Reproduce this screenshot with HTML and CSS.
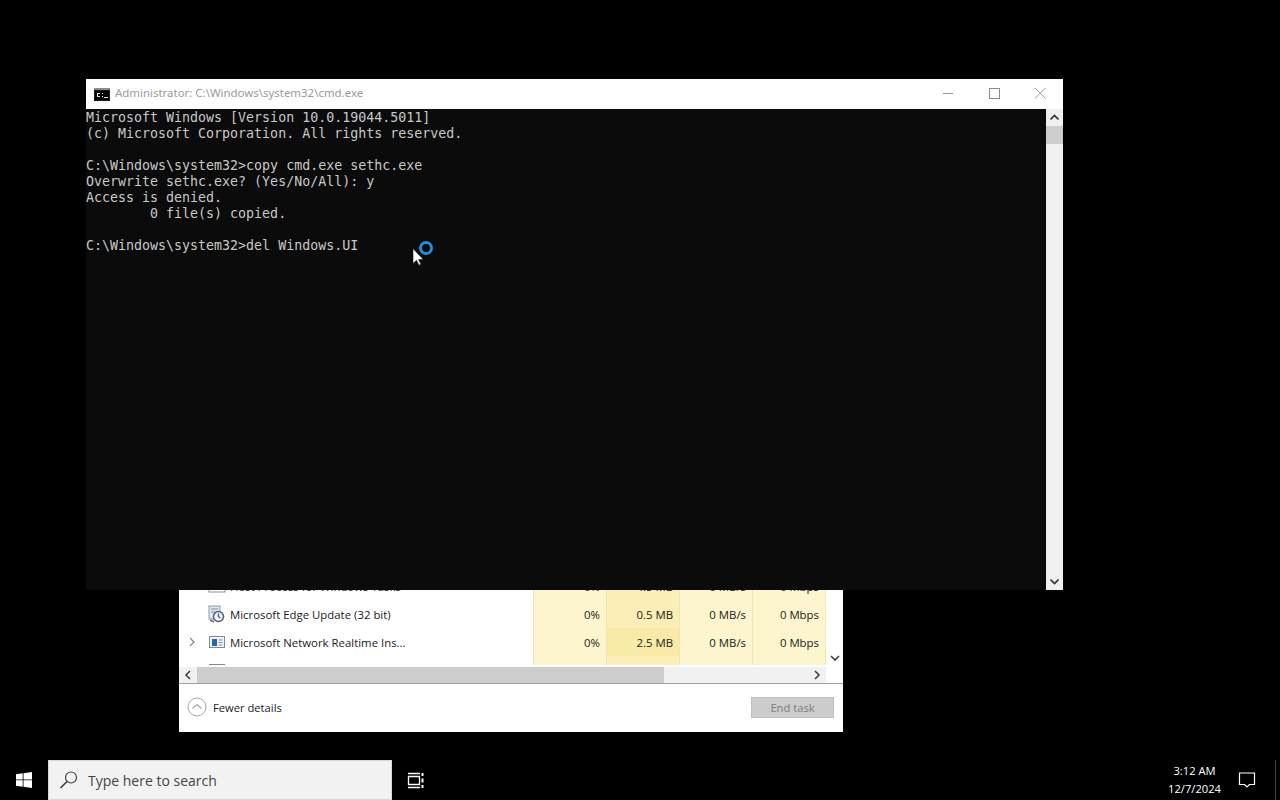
FILE: index.html
```html
<!DOCTYPE html>
<html lang="en">
<head>
<meta charset="utf-8">
<title>Administrator: C:\Windows\system32\cmd.exe</title>
<link rel="stylesheet" href="styles.css">
</head>
<body>
<div class="screen">
  <main class="desktop">
    <section class="taskmgr">
      <div class="tm-body">
        <div class="tm-table">
          <div class="tm-rows">
            <div class="row row-cut-top">
              <span class="chev"></span>
              <svg class="app-ico" width="18" height="18" viewBox="0 0 18 18"><rect x="1" y="3" width="16" height="12" fill="#fff" stroke="#8a8f98"/><rect x="3" y="6" width="6" height="7" fill="#2f6fb0"/></svg>
              <span class="name">Host Process for Windows Tasks</span>
              <span class="cell">0%</span><span class="cell mem">4.5 MB</span><span class="cell">0 MB/s</span><span class="cell">0 Mbps</span>
            </div>
            <div class="row">
              <span class="chev"></span>
              <svg class="app-ico" width="18" height="18" viewBox="0 0 18 18"><rect x="1" y="1" width="11" height="13" fill="#dfe8f0" stroke="#8d9aa8"/><path d="M3 4h7M3 7h4" stroke="#7b8a9a"/><circle cx="10.500" cy="11.500" r="5" fill="#f2f5f8" stroke="#55606c" stroke-width="1.500"/><path d="M10.500 8.500v3l2 1.500" stroke="#3c78b4" stroke-width="1.500" fill="none"/><path d="M2 15l4 2" stroke="#5d6a76" stroke-width="1.500"/></svg>
              <span class="name">Microsoft Edge Update (32 bit)</span>
              <span class="cell">0%</span><span class="cell mem">0.5 MB</span><span class="cell">0 MB/s</span><span class="cell">0 Mbps</span>
            </div>
            <div class="row">
              <span class="chev"><svg width="8" height="10" viewBox="0 0 8 10"><path d="M2 1l4 4-4 4" fill="none" stroke="#8a8a8a" stroke-width="1.300"/></svg></span>
              <svg class="app-ico" width="18" height="18" viewBox="0 0 18 18"><rect x="1.500" y="3.500" width="15" height="11" fill="#f4f7fa" stroke="#7f8994"/><rect x="4" y="6" width="5" height="7" fill="#2369ac"/><path d="M10.500 7h4M10.500 9.500h4M10.500 12h4" stroke="#7f8994"/></svg>
              <span class="name">Microsoft Network Realtime Ins...</span>
              <span class="cell">0%</span><span class="cell mem mem-strong">2.5 MB</span><span class="cell">0 MB/s</span><span class="cell">0 Mbps</span>
            </div>
            <div class="row">
              <span class="chev"></span>
              <svg class="app-ico" width="18" height="18" viewBox="0 0 18 18"><rect x="1.500" y="3.500" width="15" height="11" fill="#f4f7fa" stroke="#7f8994"/></svg>
              <span class="name"></span>
              <span class="cell"></span><span class="cell mem"></span><span class="cell"></span><span class="cell"></span>
            </div>
          </div>
          <div class="tm-vscroll">
            <svg class="vs-down" width="10" height="7" viewBox="0 0 10 7"><path d="M1 1l4 4 4-4" fill="none" stroke="#404040" stroke-width="1.600"/></svg>
          </div>
        </div>
        <div class="tm-hscroll">
          <svg class="hs-btn" width="18" height="16" viewBox="0 0 17 16"><path d="M10.500 4l-4 4 4 4" fill="none" stroke="#404040" stroke-width="1.600"/></svg>
          <div class="hs-track"><div class="hs-thumb"></div></div>
          <svg class="hs-btn" width="18" height="16" viewBox="0 0 17 16"><path d="M6.500 4l4 4-4 4" fill="none" stroke="#404040" stroke-width="1.600"/></svg>
          <span class="hs-corner"></span>
        </div>
      </div>
      <footer class="tm-footer">
        <div class="fewer">
          <svg width="20" height="20" viewBox="0 0 20 20"><circle cx="10" cy="10" r="9" fill="#fff" stroke="#a6a6a6"/><path d="M5.500 11.500l4.500-4 4.500 4" fill="none" stroke="#a6a6a6" stroke-width="1.200"/></svg>
          <span>Fewer details</span>
        </div>
        <div class="end-task">End task</div>
      </footer>
    </section>

    <section class="cmd">
      <header class="cmd-title">
        <svg class="cmd-ico" width="16" height="13" viewBox="0 0 16 13"><rect width="16" height="13" fill="#1a1a1a"/><rect y="0" width="16" height="2" fill="#8c8c8c"/><rect x="1" y="3" width="14" height="9" fill="#000"/><path d="M3 5h3v1H4v2h2v1H3zM8 8h1v1H8zM8 5h1v1H8zM10 9h4v1h-4z" fill="#e6e6e6"/></svg>
        <span class="cmd-name">Administrator: C:\Windows\system32\cmd.exe</span>
        <div class="win-btns">
          <svg class="win-btn" width="46" height="30" viewBox="0 0 46 30"><path d="M18 14.500h10" stroke="#9a9a9a"/></svg>
          <svg class="win-btn" width="46" height="30" viewBox="0 0 46 30"><rect x="18.500" y="9.500" width="10" height="10" fill="none" stroke="#8a8a8a"/></svg>
          <svg class="win-btn" width="46" height="30" viewBox="0 0 46 30"><path d="M18 9l10.500 10.500M28.500 9L18 19.500" stroke="#9a9a9a"/></svg>
        </div>
      </header>
      <div class="cmd-main">
        <pre class="console">Microsoft Windows [Version 10.0.19044.5011]
(c) Microsoft Corporation. All rights reserved.

C:\Windows\system32&gt;copy cmd.exe sethc.exe
Overwrite sethc.exe? (Yes/No/All): y
Access is denied.
        0 file(s) copied.

C:\Windows\system32&gt;del Windows.UI</pre>
        <div class="cmd-scroll">
          <svg class="sb-btn" width="17" height="17" viewBox="0 0 17 17"><path d="M4.500 10.500l4-4 4 4" fill="none" stroke="#303030" stroke-width="1.700"/></svg>
          <div class="sb-thumb"></div>
          <div class="sb-track"></div>
          <svg class="sb-btn" width="17" height="17" viewBox="0 0 17 17"><path d="M4.500 6.500l4 4 4-4" fill="none" stroke="#303030" stroke-width="1.700"/></svg>
        </div>
      </div>
    </section>

    <svg class="pointer" width="30" height="30" viewBox="0 0 30 30">
      <circle cx="18" cy="9" r="5.500" fill="none" stroke="#1f8fdc" stroke-width="3"/>
      <path d="M5 9.500v15l3.500-3.200 2.500 5 2-1-2.400-4.800h4.600z" fill="#fff" stroke="#111" stroke-width=".6"/>
    </svg>
  </main>

  <nav class="taskbar">
    <div class="start">
      <svg width="16" height="16" viewBox="0 0 16 16"><path d="M0 2.300l6.700-1V7.500H0zM7.500 1.200L16 0v7.500H7.500zM0 8.300h6.700v6.400L0 13.700zM7.500 8.300H16V16l-8.500-1.200z" fill="#fff"/></svg>
    </div>
    <div class="search">
      <svg width="20" height="20" viewBox="0 0 20 20"><circle cx="12" cy="7.500" r="5.500" fill="none" stroke="#444" stroke-width="1.200"/><path d="M8 11.500l-6.500 6.500" stroke="#333" stroke-width="1.500"/></svg>
      <span>Type here to search</span>
    </div>
    <div class="taskview">
      <svg width="18" height="17" viewBox="0 0 18 17"><path d="M1.500 4.500h11v8h-11zM1 1.500h12M1 15.500h12" fill="none" stroke="#fff" stroke-width="1.300"/><path d="M15.500 1v3M15.500 6.500v4M15.500 13v3" stroke="#fff" stroke-width="2"/></svg>
    </div>
    <div class="tray">
      <div class="clock"><span>3:12 AM</span><span>12/7/2024</span></div>
      <svg class="notif" width="18" height="18" viewBox="0 0 18 18"><path d="M1.500 2h15v11.500h-5L9 16l-2.500-2.500h-5z" fill="none" stroke="#fff" stroke-width="1.200"/></svg>
      <span class="show-desktop"></span>
    </div>
  </nav>
</div>
</body>
</html>
```
FILE: styles.css
```css
* { box-sizing: border-box; }
html, body { margin: 0; padding: 0; background: #000; }
.screen {
  width: 1280px;
  height: 800px;
  display: flex;
  flex-direction: column;
  overflow: hidden;
  background: #000;
  font-family: "Open Sans", "Noto Sans", sans-serif;
}
.desktop { position: relative; flex: 1; }

/* Task Manager window */
.taskmgr {
  position: absolute;
  left: 179px;
  top: 573px;
  width: 664px;
  height: 159px;
  background: #fff;
  display: flex;
  flex-direction: column;
}
.tm-body { height: 111px; display: flex; flex-direction: column; border-bottom: 1px solid #a0a0a0; }
.tm-table { display: flex; height: 93px; flex: none; overflow: hidden; }
.tm-rows { width: 647px; height: 92px; overflow: hidden; }
.row {
  height: 28px;
  display: flex;
  align-items: center;
  font-size: 11.4px;
  color: #1a1a1a;
}
.row-cut-top { margin-top: -1px; }
.chev { width: 29px; padding-left: 9px; display: flex; align-items: center; }
.app-ico { flex: none; margin-right: 4px; }
.name { width: 303px; white-space: nowrap; overflow: hidden; }
.cell {
  width: 73px;
  height: 100%;
  padding-right: 6px;
  display: flex;
  align-items: center;
  justify-content: flex-end;
  background: #fdf5cd;
  border-left: 1px solid #efe6b4;
}
.cell:last-child { width: 74px; border-right: 1px solid #efe6b4; }
.mem { background: #fbeeb6; }
.mem-strong { background: #f9eaa8; }
.tm-vscroll {
  width: 17px;
  background: #fff;
  display: flex;
  flex-direction: column;
  justify-content: flex-end;
  align-items: center;
  padding-bottom: 4px;
}
.tm-hscroll { display: flex; height: 17px; flex: none; background: #f1f1f1; border-top: 1px solid #fff; align-items: center; }
.hs-btn { flex: none; display: block; }
.hs-track { width: 611px; height: 16px; }
.hs-thumb { width: 467px; height: 16px; background: #cdcdcd; }
.hs-corner { flex: 1; height: 16px; background: #fff; }
.tm-footer {
  flex: 1;
  display: flex;
  align-items: center;
  justify-content: space-between;
  padding: 0 9px 2px 8px;
  font-size: 11.2px;
  color: #1a1a1a;
}
.fewer { display: flex; align-items: center; gap: 6px; }
.end-task {
  width: 83px;
  height: 21px;
  display: flex;
  align-items: center;
  justify-content: center;
  background: #cccccc;
  border: 1px solid #bfbfbf;
  color: #7d7d7d;
}

/* Command Prompt window */
.cmd {
  position: absolute;
  left: 86px;
  top: 79px;
  width: 977px;
  height: 511px;
  display: flex;
  flex-direction: column;
}
.cmd-title {
  height: 30px;
  flex: none;
  background: #fff;
  display: flex;
  align-items: center;
  padding-left: 8px;
}
.cmd-ico { flex: none; margin-right: 5px; }
.cmd-name { font-size: 11.45px; line-height: 14px; margin-top: -2px; color: #9b9b9b; font-family: "Noto Sans", "Open Sans", sans-serif; }
.win-btns { margin-left: auto; display: flex; }
.win-btn { display: block; }
.cmd-main { flex: 1; display: flex; min-height: 0; }
.console {
  flex: 1;
  margin: 0;
  padding-top: 1px;
  background: #0b0b0b;
  color: #c8c8c8;
  font-family: "DejaVu Sans Mono", "Liberation Mono", monospace;
  font-size: 13.3px;
  line-height: 16px;
  overflow: hidden;
}
.cmd-scroll { width: 17px; display: flex; flex-direction: column; background: #f0f0f0; }
.sb-btn { flex: none; display: block; }
.sb-thumb { height: 18px; background: #cdcdcd; flex: none; }
.sb-track { flex: 1; }

.pointer { position: absolute; left: 408px; top: 239px; }

/* Taskbar */
.taskbar {
  height: 40px;
  flex: none;
  display: flex;
  align-items: stretch;
  background: #000;
  color: #fff;
  font-family: "Open Sans", "Noto Sans", sans-serif;
}
.start { width: 48px; display: flex; align-items: center; justify-content: center; }
.search {
  width: 344px;
  background: #f2f2f2;
  border: 1px solid #d6d6d6;
  display: flex;
  align-items: center;
  gap: 9px;
  padding-left: 10px;
  color: #444;
  font-size: 14px;
}
.taskview { width: 48px; display: flex; align-items: center; justify-content: center; }
.tray { margin-left: auto; display: flex; align-items: center; }
.clock {
  display: flex;
  flex-direction: column;
  align-items: center;
  font-size: 11.2px;
  line-height: 18px;
  margin-right: 17px;
}
.notif { margin-right: 19px; }
.show-desktop { width: 1px; height: 40px; background: #444; margin-right: 4px; }
```
